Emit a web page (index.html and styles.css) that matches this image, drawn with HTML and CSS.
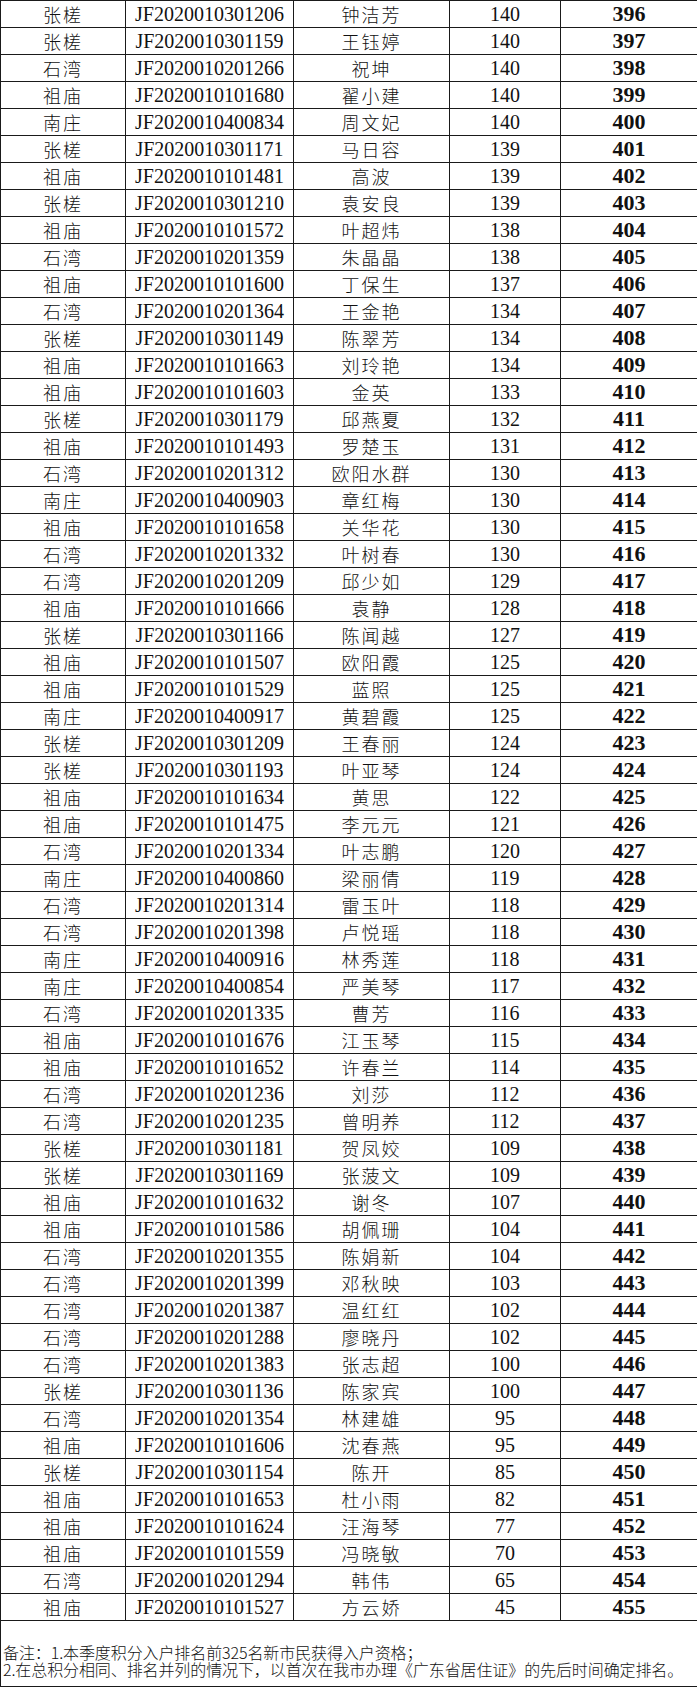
FILE: index.html
```
<!DOCTYPE html>
<html lang="zh-CN">
<head>
<meta charset="utf-8">
<title>积分入户排名</title>
<link rel="stylesheet" href="styles.css">
</head>
<body>
<table class="rank">
<colgroup><col class="c1"><col class="c2"><col class="c3"><col class="c4"><col class="c5"></colgroup>
<tbody id="rows">
<tr><td class="zh">张槎</td><td class="id">JF2020010301206</td><td class="nm">钟洁芳</td><td class="sc">140</td><td class="rk">396</td></tr>
<tr><td class="zh">张槎</td><td class="id">JF2020010301159</td><td class="nm">王钰婷</td><td class="sc">140</td><td class="rk">397</td></tr>
<tr><td class="zh">石湾</td><td class="id">JF2020010201266</td><td class="nm">祝坤</td><td class="sc">140</td><td class="rk">398</td></tr>
<tr><td class="zh">祖庙</td><td class="id">JF2020010101680</td><td class="nm">翟小建</td><td class="sc">140</td><td class="rk">399</td></tr>
<tr><td class="zh">南庄</td><td class="id">JF2020010400834</td><td class="nm">周文妃</td><td class="sc">140</td><td class="rk">400</td></tr>
<tr><td class="zh">张槎</td><td class="id">JF2020010301171</td><td class="nm">马日容</td><td class="sc">139</td><td class="rk">401</td></tr>
<tr><td class="zh">祖庙</td><td class="id">JF2020010101481</td><td class="nm">高波</td><td class="sc">139</td><td class="rk">402</td></tr>
<tr><td class="zh">张槎</td><td class="id">JF2020010301210</td><td class="nm">袁安良</td><td class="sc">139</td><td class="rk">403</td></tr>
<tr><td class="zh">祖庙</td><td class="id">JF2020010101572</td><td class="nm">叶超炜</td><td class="sc">138</td><td class="rk">404</td></tr>
<tr><td class="zh">石湾</td><td class="id">JF2020010201359</td><td class="nm">朱晶晶</td><td class="sc">138</td><td class="rk">405</td></tr>
<tr><td class="zh">祖庙</td><td class="id">JF2020010101600</td><td class="nm">丁保生</td><td class="sc">137</td><td class="rk">406</td></tr>
<tr><td class="zh">石湾</td><td class="id">JF2020010201364</td><td class="nm">王金艳</td><td class="sc">134</td><td class="rk">407</td></tr>
<tr><td class="zh">张槎</td><td class="id">JF2020010301149</td><td class="nm">陈翠芳</td><td class="sc">134</td><td class="rk">408</td></tr>
<tr><td class="zh">祖庙</td><td class="id">JF2020010101663</td><td class="nm">刘玲艳</td><td class="sc">134</td><td class="rk">409</td></tr>
<tr><td class="zh">祖庙</td><td class="id">JF2020010101603</td><td class="nm">金英</td><td class="sc">133</td><td class="rk">410</td></tr>
<tr><td class="zh">张槎</td><td class="id">JF2020010301179</td><td class="nm">邱燕夏</td><td class="sc">132</td><td class="rk">411</td></tr>
<tr><td class="zh">祖庙</td><td class="id">JF2020010101493</td><td class="nm">罗楚玉</td><td class="sc">131</td><td class="rk">412</td></tr>
<tr><td class="zh">石湾</td><td class="id">JF2020010201312</td><td class="nm">欧阳水群</td><td class="sc">130</td><td class="rk">413</td></tr>
<tr><td class="zh">南庄</td><td class="id">JF2020010400903</td><td class="nm">章红梅</td><td class="sc">130</td><td class="rk">414</td></tr>
<tr><td class="zh">祖庙</td><td class="id">JF2020010101658</td><td class="nm">关华花</td><td class="sc">130</td><td class="rk">415</td></tr>
<tr><td class="zh">石湾</td><td class="id">JF2020010201332</td><td class="nm">叶树春</td><td class="sc">130</td><td class="rk">416</td></tr>
<tr><td class="zh">石湾</td><td class="id">JF2020010201209</td><td class="nm">邱少如</td><td class="sc">129</td><td class="rk">417</td></tr>
<tr><td class="zh">祖庙</td><td class="id">JF2020010101666</td><td class="nm">袁静</td><td class="sc">128</td><td class="rk">418</td></tr>
<tr><td class="zh">张槎</td><td class="id">JF2020010301166</td><td class="nm">陈闻越</td><td class="sc">127</td><td class="rk">419</td></tr>
<tr><td class="zh">祖庙</td><td class="id">JF2020010101507</td><td class="nm">欧阳霞</td><td class="sc">125</td><td class="rk">420</td></tr>
<tr><td class="zh">祖庙</td><td class="id">JF2020010101529</td><td class="nm">蓝照</td><td class="sc">125</td><td class="rk">421</td></tr>
<tr><td class="zh">南庄</td><td class="id">JF2020010400917</td><td class="nm">黄碧霞</td><td class="sc">125</td><td class="rk">422</td></tr>
<tr><td class="zh">张槎</td><td class="id">JF2020010301209</td><td class="nm">王春丽</td><td class="sc">124</td><td class="rk">423</td></tr>
<tr><td class="zh">张槎</td><td class="id">JF2020010301193</td><td class="nm">叶亚琴</td><td class="sc">124</td><td class="rk">424</td></tr>
<tr><td class="zh">祖庙</td><td class="id">JF2020010101634</td><td class="nm">黄思</td><td class="sc">122</td><td class="rk">425</td></tr>
<tr><td class="zh">祖庙</td><td class="id">JF2020010101475</td><td class="nm">李元元</td><td class="sc">121</td><td class="rk">426</td></tr>
<tr><td class="zh">石湾</td><td class="id">JF2020010201334</td><td class="nm">叶志鹏</td><td class="sc">120</td><td class="rk">427</td></tr>
<tr><td class="zh">南庄</td><td class="id">JF2020010400860</td><td class="nm">梁丽倩</td><td class="sc">119</td><td class="rk">428</td></tr>
<tr><td class="zh">石湾</td><td class="id">JF2020010201314</td><td class="nm">雷玉叶</td><td class="sc">118</td><td class="rk">429</td></tr>
<tr><td class="zh">石湾</td><td class="id">JF2020010201398</td><td class="nm">卢悦瑶</td><td class="sc">118</td><td class="rk">430</td></tr>
<tr><td class="zh">南庄</td><td class="id">JF2020010400916</td><td class="nm">林秀莲</td><td class="sc">118</td><td class="rk">431</td></tr>
<tr><td class="zh">南庄</td><td class="id">JF2020010400854</td><td class="nm">严美琴</td><td class="sc">117</td><td class="rk">432</td></tr>
<tr><td class="zh">石湾</td><td class="id">JF2020010201335</td><td class="nm">曹芳</td><td class="sc">116</td><td class="rk">433</td></tr>
<tr><td class="zh">祖庙</td><td class="id">JF2020010101676</td><td class="nm">江玉琴</td><td class="sc">115</td><td class="rk">434</td></tr>
<tr><td class="zh">祖庙</td><td class="id">JF2020010101652</td><td class="nm">许春兰</td><td class="sc">114</td><td class="rk">435</td></tr>
<tr><td class="zh">石湾</td><td class="id">JF2020010201236</td><td class="nm">刘莎</td><td class="sc">112</td><td class="rk">436</td></tr>
<tr><td class="zh">石湾</td><td class="id">JF2020010201235</td><td class="nm">曾明养</td><td class="sc">112</td><td class="rk">437</td></tr>
<tr><td class="zh">张槎</td><td class="id">JF2020010301181</td><td class="nm">贺凤姣</td><td class="sc">109</td><td class="rk">438</td></tr>
<tr><td class="zh">张槎</td><td class="id">JF2020010301169</td><td class="nm">张菠文</td><td class="sc">109</td><td class="rk">439</td></tr>
<tr><td class="zh">祖庙</td><td class="id">JF2020010101632</td><td class="nm">谢冬</td><td class="sc">107</td><td class="rk">440</td></tr>
<tr><td class="zh">祖庙</td><td class="id">JF2020010101586</td><td class="nm">胡佩珊</td><td class="sc">104</td><td class="rk">441</td></tr>
<tr><td class="zh">石湾</td><td class="id">JF2020010201355</td><td class="nm">陈娟新</td><td class="sc">104</td><td class="rk">442</td></tr>
<tr><td class="zh">石湾</td><td class="id">JF2020010201399</td><td class="nm">邓秋映</td><td class="sc">103</td><td class="rk">443</td></tr>
<tr><td class="zh">石湾</td><td class="id">JF2020010201387</td><td class="nm">温红红</td><td class="sc">102</td><td class="rk">444</td></tr>
<tr><td class="zh">石湾</td><td class="id">JF2020010201288</td><td class="nm">廖晓丹</td><td class="sc">102</td><td class="rk">445</td></tr>
<tr><td class="zh">石湾</td><td class="id">JF2020010201383</td><td class="nm">张志超</td><td class="sc">100</td><td class="rk">446</td></tr>
<tr><td class="zh">张槎</td><td class="id">JF2020010301136</td><td class="nm">陈家宾</td><td class="sc">100</td><td class="rk">447</td></tr>
<tr><td class="zh">石湾</td><td class="id">JF2020010201354</td><td class="nm">林建雄</td><td class="sc">95</td><td class="rk">448</td></tr>
<tr><td class="zh">祖庙</td><td class="id">JF2020010101606</td><td class="nm">沈春燕</td><td class="sc">95</td><td class="rk">449</td></tr>
<tr><td class="zh">张槎</td><td class="id">JF2020010301154</td><td class="nm">陈开</td><td class="sc">85</td><td class="rk">450</td></tr>
<tr><td class="zh">祖庙</td><td class="id">JF2020010101653</td><td class="nm">杜小雨</td><td class="sc">82</td><td class="rk">451</td></tr>
<tr><td class="zh">祖庙</td><td class="id">JF2020010101624</td><td class="nm">汪海琴</td><td class="sc">77</td><td class="rk">452</td></tr>
<tr><td class="zh">祖庙</td><td class="id">JF2020010101559</td><td class="nm">冯晓敏</td><td class="sc">70</td><td class="rk">453</td></tr>
<tr><td class="zh">石湾</td><td class="id">JF2020010201294</td><td class="nm">韩伟</td><td class="sc">65</td><td class="rk">454</td></tr>
<tr><td class="zh">祖庙</td><td class="id">JF2020010101527</td><td class="nm">方云娇</td><td class="sc">45</td><td class="rk">455</td></tr>
</tbody>
<tfoot>
<tr class="note-row"><td colspan="5" class="note"><div>备注：1.本季度积分入户排名前325名新市民获得入户资格；</div><div>2.在总积分相同、排名并列的情况下，以首次在我市办理《广东省居住证》的先后时间确定排名。</div></td></tr>
</tfoot>
</table>
</body>
</html>
```

FILE: styles.css
```
html, body {
  margin: 0;
  padding: 0;
  background: #ffffff;
}

.rank {
  border-collapse: collapse;
  table-layout: fixed;
  width: 697px;
  color: #111111;
}

.c1 { width: 125px; }
.c2 { width: 168px; }
.c3 { width: 156px; }
.c4 { width: 111px; }
.c5 { width: 137px; }

.rank td {
  border: 1px solid #1a1a1a;
  padding: 0;
  height: 26px;
  text-align: center;
  vertical-align: middle;
  white-space: nowrap;
  overflow: hidden;
  line-height: 1;
}

.zh,
.nm {
  font-family: "Noto Sans CJK SC", sans-serif;
  font-size: 18px;
  letter-spacing: 2px;
  font-weight: 300;
}

.id,
.sc {
  font-family: "Liberation Serif", serif;
  font-size: 20px;
}

.rk {
  font-family: "Liberation Serif", serif;
  font-size: 22px;
  font-weight: 700;
}

.rank td.note {
  height: 66px;
  text-align: left;
  vertical-align: top;
  padding: 23px 0 0 2px;
  box-sizing: border-box;
  font-family: "Noto Sans CJK SC", sans-serif;
  font-size: 16px;
  line-height: 17px;
  font-weight: 300;
  letter-spacing: -0.1px;
}
```
